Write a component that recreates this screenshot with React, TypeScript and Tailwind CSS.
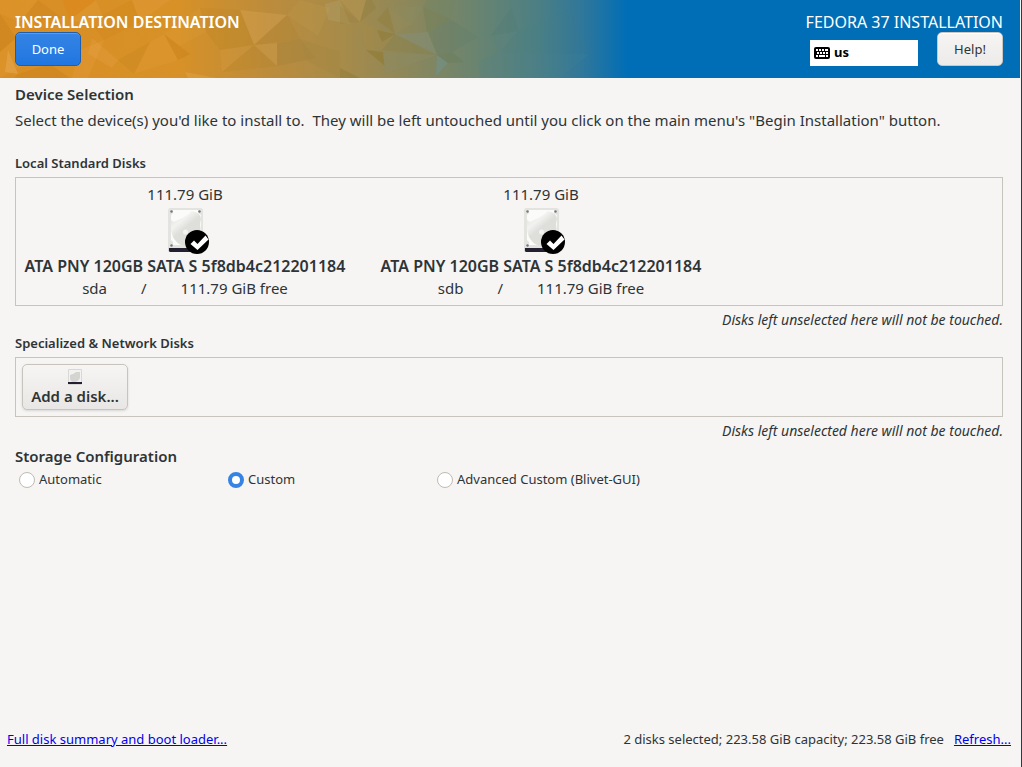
import type { ReactNode } from "react";

interface Disk {
  id: string;
  capacity: string;
  model: string;
  free: string;
}

const DISKS: Disk[] = [
  { id: "sda", capacity: "111.79 GiB", model: "ATA PNY 120GB SATA S 5f8db4c212201184", free: "111.79 GiB free" },
  { id: "sdb", capacity: "111.79 GiB", model: "ATA PNY 120GB SATA S 5f8db4c212201184", free: "111.79 GiB free" }
];

const STORAGE_MODES = [
  { value: "automatic", label: "Automatic" },
  { value: "custom", label: "Custom" },
  { value: "blivet", label: "Advanced Custom (Blivet-GUI)" }
];

// points, fill, opacity
const FACETS: [string, string, number][] = [
  ["0,0 38,0 20,22 0,14", "#e8a03a", 0.35],
  ["38,0 62,18 20,22", "#b87412", 0.2],
  ["62,0 96,0 70,20", "#e87e10", 0.35],
  ["70,20 96,0 108,30", "#efae50", 0.25],
  ["0,14 16,38 0,52", "#c07810", 0.35],
  ["0,52 16,38 24,66 0,78", "#e8a640", 0.25],
  ["8,50 18,74 5,72", "#f0b868", 0.5],
  ["18,74 50,64 70,78 14,78", "#b87414", 0.3],
  ["80,50 104,40 88,78 72,78", "#f0a848", 0.3],
  ["104,40 90,22 132,0 140,22", "#c87c10", 0.25],
  ["132,0 170,0 140,22", "#f0a850", 0.3],
  ["92,38 118,60 112,68 88,54", "#f0b060", 0.25],
  ["118,60 150,42 134,74", "#b87c18", 0.25],
  ["150,42 164,34 178,60 134,74", "#eba848", 0.25],
  ["164,34 178,60 190,54", "#bf7610", 0.35],
  ["164,34 200,8 206,32 180,46", "#e8a84c", 0.2],
  ["200,8 240,10 206,32", "#b87c20", 0.2],
  ["240,10 287,15 254,45", "#e0b060", 0.4],
  ["240,10 254,45 220,50 206,32", "#b8831e", 0.35],
  ["287,15 254,45 300,39", "#a87c28", 0.25],
  ["220,50 254,45 222,72", "#e0a850", 0.25],
  ["254,45 277,66 222,72", "#b08020", 0.25],
  ["254,45 277,43 277,66", "#d8aa58", 0.35],
  ["277,43 300,39 316,58 277,66", "#987a38", 0.3],
  ["287,15 300,0 330,8 318,36", "#c8a050", 0.3],
  ["325,4 340,0 350,24 328,20", "#b8b080", 0.35],
  ["300,39 340,52 340,78 306,60", "#a08440", 0.3],
  ["185,72 216,78 188,78", "#f0b868", 0.35],
  ["340,6 360,22 340,24", "#9a7c34", 0.3],
  ["340,0 366,0 360,22", "#c8a058", 0.4],
  ["366,0 372,0 376,8 360,22", "#8c7834", 0.4],
  ["388,7 395,34 377,20", "#94803a", 0.65],
  ["388,7 412,24 395,34", "#9c8e5e", 0.45],
  ["388,7 423,7 412,24", "#8c9068", 0.35],
  ["423,7 427,0 456,0 450,19", "#6e8464", 0.45],
  ["423,7 450,19 427,32", "#748058", 0.65],
  ["360,22 366,50 382,50 395,34", "#b08c40", 0.3],
  ["377,30 395,34 382,42", "#8c7830", 0.6],
  ["395,34 428,32 437,55", "#84907a", 0.7],
  ["395,34 437,55 382,50", "#8c824c", 0.65],
  ["366,50 383,52 385,66", "#907a2c", 0.75],
  ["383,52 437,55 385,74", "#8c8c66", 0.65],
  ["428,32 450,19 478,37 452,52 437,55", "#64806a", 0.5],
  ["437,55 448,63 436,76", "#70948c", 0.8],
  ["437,55 452,52 464,62 448,63", "#687e5c", 0.65],
  ["340,68 360,78 340,78", "#8c7830", 0.55],
  ["490,36 512,8 518,31", "#4e7c74", 0.3],
  ["490,36 518,31 500,52", "#5c8884", 0.3],
  ["478,62 500,52 590,54 560,78 480,78", "#4c8698", 0.2],
  ["518,31 570,10 590,54 500,52", "#42808c", 0.15]
];

const HeaderArtwork = (): JSX.Element => (
  <svg className="absolute inset-0 h-full w-[640px]" viewBox="0 0 640 78" preserveAspectRatio="none" aria-hidden="true">
    <defs>
      <linearGradient id="sweep" x1="0" y1="0" x2="640" y2="0" gradientUnits="userSpaceOnUse">
        <stop offset="0" stopColor="#d98e25" />
        <stop offset="0.28" stopColor="#d79127" />
        <stop offset="0.42" stopColor="#bc8c3c" />
        <stop offset="0.54" stopColor="#a68b4a" />
        <stop offset="0.64" stopColor="#8c875b" />
        <stop offset="0.74" stopColor="#6b846f" />
        <stop offset="0.84" stopColor="#4c7f84" />
        <stop offset="0.91" stopColor="#30779a" />
        <stop offset="0.98" stopColor="#006eb6" />
        <stop offset="1" stopColor="#006eb6" />
      </linearGradient>
    </defs>
    <rect width="640" height="78" fill="url(#sweep)" />
    <g opacity="0.7">
      {FACETS.map(([points, fill, opacity]) => (
        <polygon key={points} points={points} fill={fill} opacity={opacity} />
      ))}
    </g>
  </svg>
);

const KeyboardIcon = (): JSX.Element => (
  <svg className="h-3 w-4" viewBox="0 0 16 12" aria-hidden="true">
    <rect width="16" height="12" rx="2" fill="#000" />
    <path
      d="M2 2h2v2H2zM5 2h2v2H5zM8 2h2v2H8zM11 2h3v2h-3zM3 5h2v2H3zM6 5h2v2H6zM9 5h2v2H9zM12 5h2v2h-2zM2 8h2v2H2zM5 8h6v2H5zM12 8h2v2h-2z"
      fill="#fff"
    />
  </svg>
);

const DiskIcon = (): JSX.Element => (
  <svg className="h-12 w-12" viewBox="1 0 48 48" aria-hidden="true">
    <defs>
      <linearGradient id="platter" x1="0" y1="0" x2="0.7" y2="1">
        <stop offset="0.1" stopColor="#e2e2df" />
        <stop offset="0.35" stopColor="#f2f2f0" />
        <stop offset="0.55" stopColor="#dededb" />
        <stop offset="1" stopColor="#deded9" />
      </linearGradient>
    </defs>
    <rect x="8" y="4" width="35" height="42" rx="2" fill="#d3d3cf" />
    <rect x="8" y="2" width="35" height="41" rx="2.5" fill="#e3e3e0" />
    <path d="M9 42h33v2.5q0 1.500-1.500 1.500h-30Q9 46 9 44.500z" fill="#241f31" />
    <path d="M13 4h25v3l3 2v27l-3 3H13v-3l-2-2V18l2-2-2-2V9l2-2z" fill="#fbfbfa" />
    <path d="M11 15q3 2 7-1 8-3 14-9 9 2 9 8l-1 5q1 5 0 8-2 11-13 14-8 0-12-6-5-6-4-19z" fill="url(#platter)" />
    <circle cx="25.500" cy="26" r="2.500" fill="#f3f3f1" />
    <g fill="#77767b">
      <circle cx="11.500" cy="5.500" r="1.200" />
      <circle cx="39.500" cy="5.500" r="1.200" />
      <circle cx="11.500" cy="39.500" r="1.200" />
    </g>
  </svg>
);

const CheckBadge = (): JSX.Element => (
  <svg className="absolute right-0 bottom-0 h-6 w-6" viewBox="0 0 24 24" aria-hidden="true">
    <circle cx="12" cy="12" r="12" fill="#000" />
    <path d="M5.500 14l3.500-3.500 3.500 3.500 8-8.500 3 4L12.500 20z" fill="#fff" />
  </svg>
);

const SmallDiskIcon = (): JSX.Element => (
  <svg className="h-4 w-4" viewBox="0 0 16 16" aria-hidden="true">
    <rect x="1" y="0" width="14" height="16" rx="1" fill="#d8d8d4" />
    <rect x="2" y="1" width="12" height="12" fill="#f2f2f0" />
    <path d="M3 6q4-1 6-3h4v6q-2 4-6 4t-4-4z" fill="#d4d4d0" />
    <rect x="1" y="13" width="14" height="2" fill="#241f31" />
  </svg>
);

const DiskTile = ({ disk }: { disk: Disk }): JSX.Element => (
  <button type="button" aria-pressed="true" className="flex w-[326px] flex-col items-center text-[15px] leading-[22px]">
    <span className="leading-5">{disk.capacity}</span>
    <span className="relative mt-[2px] mb-px h-12 w-12">
      <DiskIcon />
      <CheckBadge />
    </span>
    <span className="text-base leading-[22px] font-semibold whitespace-nowrap">{disk.model}</span>
    <span className="flex gap-[34px]">
      <span>{disk.id}</span>
      <span>/</span>
      <span>{disk.free}</span>
    </span>
  </button>
);

const DiskPanel = ({ title, children }: { title: string; children: ReactNode }): JSX.Element => (
  <section>
    <h3 className="text-[13px] leading-5 font-semibold">{title}</h3>
    <div className="mt-1 flex border border-[#c6c4bd] p-[6px]">{children}</div>
    <p className="mt-1 text-right text-[14px] leading-5 italic">
      Disks left unselected here will not be touched.
    </p>
  </section>
);

const Header = (): JSX.Element => (
  <header className="relative mr-px bg-[#006eb6]">
    <HeaderArtwork />
    <div className="relative flex h-[78px] justify-between pt-3 pr-[17px] pl-[15px]">
      <div>
        <h1 className="text-base leading-5 font-semibold text-white">INSTALLATION DESTINATION</h1>
        <button
          type="button"
          className="h-[34px] w-[66px] rounded-[5px] border border-[#1b5fb4] bg-linear-to-b from-[#3584e4] to-[#1f76e0] pt-[2px] text-[13px] text-white shadow-[inset_0_1px_#5a9bea]"
        >
          Done
        </button>
      </div>
      <div>
        <p className="text-base leading-5 text-white">FEDORA 37 INSTALLATION</p>
        <div className="flex items-end justify-end gap-[19px]">
          <button type="button" className="flex h-[26px] w-[108px] items-center gap-1 bg-white px-1 text-[13px] font-bold text-black">
            <KeyboardIcon />
            us
          </button>
          <button
            type="button"
            className="h-[34px] w-[66px] rounded-[5px] border border-[#cdc7c2] bg-linear-to-b from-[#f6f5f4] to-[#edebe9] pt-[2px] text-[13px] shadow-[inset_0_1px_white]"
          >
            Help!
          </button>
        </div>
      </div>
    </div>
  </header>
);

export default function App(): JSX.Element {
  return (
    <div className="flex min-h-screen flex-col border-r border-[#2b3a4a] bg-[#f6f5f4] font-['Noto_Sans',sans-serif] text-[#2e3436]">
      <Header />
      <main className="flex-1 pt-[5px] pr-[18px] pl-[15px]">
        <h2 className="text-[15px] leading-[22px] font-semibold">Device Selection</h2>
        <p className="mt-1 mb-[22px] text-[15px] leading-[22px] whitespace-pre-wrap">
          {"Select the device(s) you'd like to install to.  They will be left untouched until you click on the main menu's \"Begin Installation\" button."}
        </p>
        <DiskPanel title="Local Standard Disks">
          <div className="flex gap-[30px]">
            {DISKS.map((disk) => (
              <DiskTile key={disk.id} disk={disk} />
            ))}
          </div>
        </DiskPanel>
        <div className="mt-[3px]">
          <DiskPanel title="Specialized & Network Disks">
            <button
              type="button"
              className="flex h-[46px] w-[106px] flex-col items-center rounded-[5px] border border-[#c6c4bd] bg-linear-to-b from-[#f6f5f4] to-[#e9e7e5] pt-1 text-[15px] leading-[22px] font-semibold shadow-sm"
            >
              <SmallDiskIcon />
              Add a disk...
            </button>
          </DiskPanel>
        </div>
        <fieldset className="mt-1">
          <legend className="text-[15px] leading-[22px] font-semibold">Storage Configuration</legend>
          <div className="flex">
            {STORAGE_MODES.map((mode) => (
              <label key={mode.value} className="flex h-[26px] w-[209px] items-center gap-1 pl-1 text-[13px] whitespace-nowrap">
                <input
                  type="radio"
                  name="storage"
                  value={mode.value}
                  defaultChecked={mode.value === "custom"}
                  className="h-4 w-4 shrink-0 appearance-none rounded-full border border-[#c0bab4] bg-white checked:border-4 checked:border-[#3584e4]"
                />
                {mode.label}
              </label>
            ))}
          </div>
        </fieldset>
      </main>
      <footer className="flex items-center justify-between pr-[10px] pb-[18px] pl-[7px] text-[13px] leading-5">
        <a href="#summary" className="text-[#0000ee] underline">
          Full disk summary and boot loader...
        </a>
        <div className="flex gap-[10px]">
          <span>2 disks selected; 223.58 GiB capacity; 223.58 GiB free</span>
          <a href="#refresh" className="text-[#0000ee] underline">
            Refresh...
          </a>
        </div>
      </footer>
    </div>
  );
}
